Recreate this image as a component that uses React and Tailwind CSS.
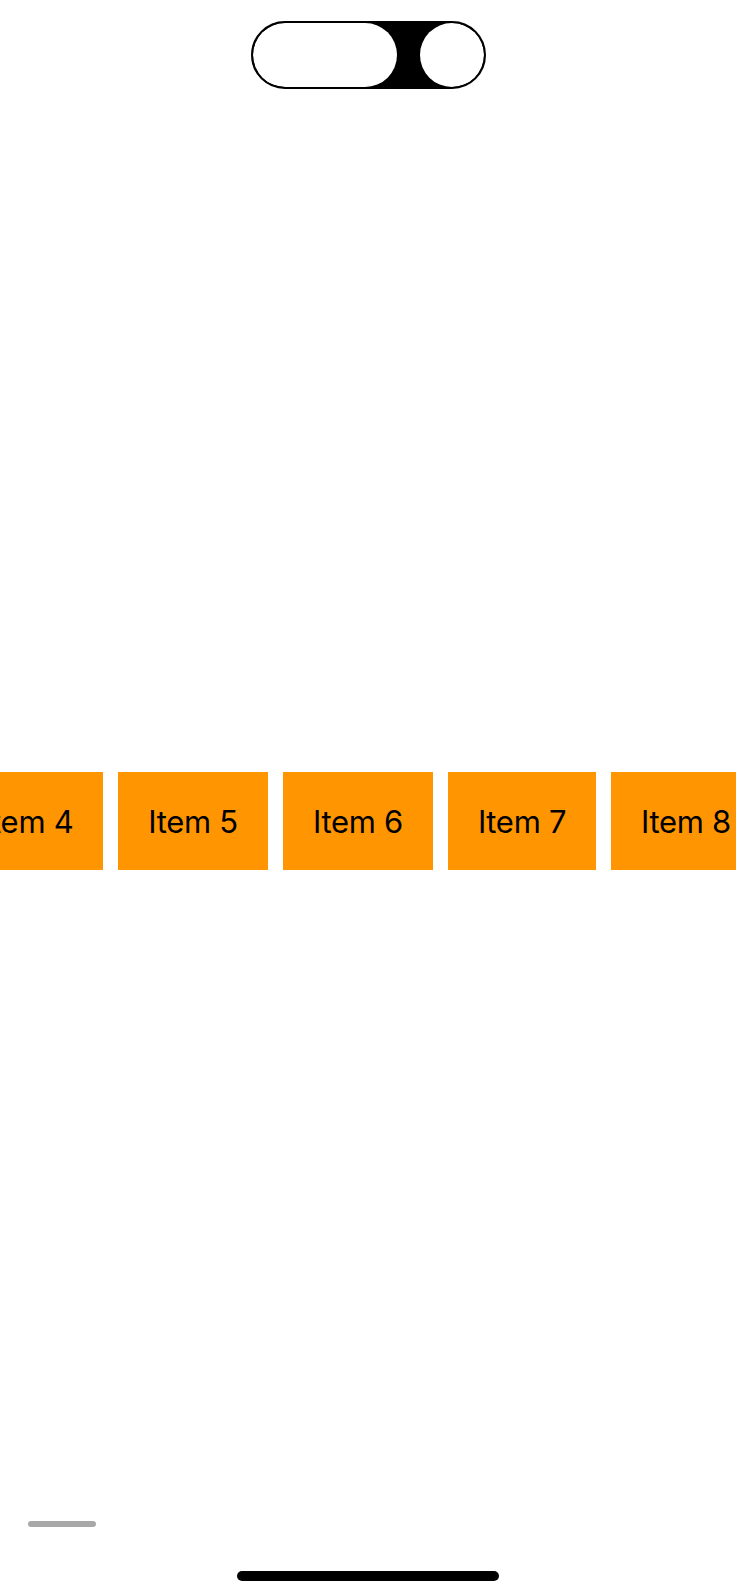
import React from "react";

const items = [
  { label: "Item 4", w: "w-[150px]" },
  { label: "Item 5", w: "w-[150px]" },
  { label: "Item 6", w: "w-[150px]" },
  { label: "Item 7", w: "w-[148px]" },
  { label: "Item 8", w: "w-[150px]" },
];

export default function App() {
  return (
    <div className="w-[736px] h-[1596px] bg-white flex flex-col overflow-hidden" style={{ fontFamily: "Inter, 'Noto Sans', sans-serif" }}>
      <div className="flex justify-center mt-[21px]">
        <div className="w-[235px] h-[68px] rounded-full border-2 border-black bg-black overflow-hidden flex justify-between items-center">
          <div className="w-[144px] h-[64px] rounded-full bg-white" />
          <div className="w-[64px] h-[64px] rounded-full bg-white" />
        </div>
      </div>
      <div className="mt-[683px] h-[98px] flex gap-[15px] overflow-hidden">
        {items.map((it, i) => (
          <div
            key={it.label}
            className={`${it.w} shrink-0 h-[98px] bg-[#ff9500] flex items-center justify-center text-[31px] tracking-[-0.01em] text-black ${i === 0 ? "-ml-[47px]" : ""}`}
          >
            <span className="leading-none whitespace-nowrap">{it.label}</span>
          </div>
        ))}
      </div>
      <div className="mt-[651px] ml-[28px] w-[68px] h-[6px] rounded-full bg-[#a8a8a8]" />
      <div className="mt-[44px] self-center w-[262px] h-[10px] rounded-full bg-black" />
    </div>
  );
}
